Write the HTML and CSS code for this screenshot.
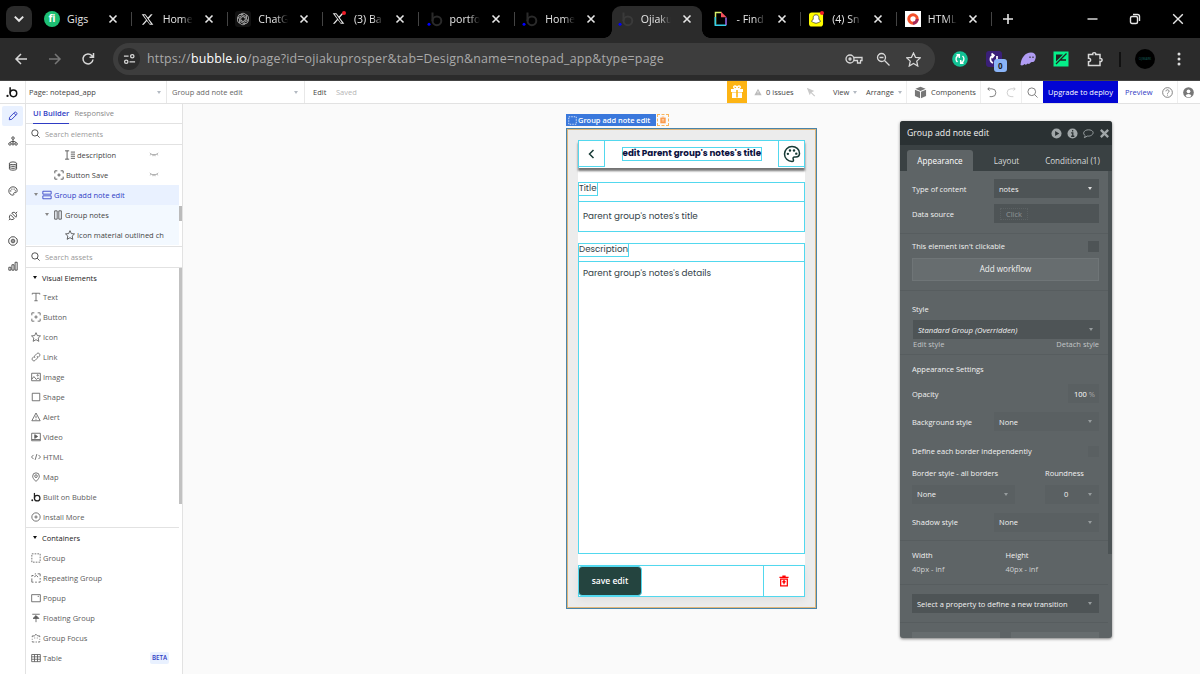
FILE: index.html
```
<!DOCTYPE html>
<html lang="en">
<head>
  <meta charset="UTF-8" />
  <title>Ojiakuprosper | Bubble Editor</title>
  <meta name="viewport" content="width=device-width, initial-scale=1.0" />
  <link rel="stylesheet" href="styles.css">
</head>
<body>

  <!-- Icon sprite -->
  <svg class="sprite" width="0" height="0">
    <symbol id="close" viewBox="0 0 10 10"><path d="M1.5 1.5l7 7M8.5 1.5l-7 7"/></symbol>
    <symbol id="x-logo" viewBox="0 0 24 24"><path stroke="none" fill="currentColor" fill-rule="evenodd" d="M18.2 2.300h3.300l-7.200 8.200 8.500 11.200h-6.700l-5.200-6.800-6 6.800H1.700l7.700-8.800L1.300 2.300h6.800l4.700 6.200zM18.500 20L7.500 4H5l11 16z"/></symbol>
    <symbol id="bubble" viewBox="0 0 16 16"><circle class="b-dot" cx="2" cy="13.200" r="1.500"/><path d="M5.500 1.500V10"/><circle cx="9.900" cy="9.800" r="4.400"/></symbol>
    <symbol id="search" viewBox="0 0 12 12"><circle cx="5.200" cy="5.200" r="4.200"/><path d="M8.200 8.200l3.300 3.300"/></symbol>
    <symbol id="star" viewBox="0 0 12 12"><path d="M6 .8l1.600 3.500 3.800.4-2.800 2.600.8 3.900L6 9.200l-3.400 2 .8-3.900L.6 4.700l3.800-.4z"/></symbol>
    <symbol id="button" viewBox="0 0 12 12"><path d="M1 4V1h3M8 1h3v3M11 8v3H8M4 11H1V8M6 4v4M4 6h4"/></symbol>
    <symbol id="palette" viewBox="0 0 24 24"><path d="M12 2a10 10 0 1 0 0 20c2 0 2.300-1.500 1.700-2.800-.8-1.700 0-3.200 1.800-3.200H17c3 0 5-2 5-5C22 5.800 17.500 2 12 2z"/><g fill="currentColor" stroke="none"><circle cx="6.500" cy="11.800" r="1.600"/><circle cx="9.300" cy="7.300" r="1.600"/><circle cx="14.700" cy="7.300" r="1.600"/><circle cx="17.700" cy="11.500" r="1.600"/></g></symbol>
    <symbol id="hidden" viewBox="0 0 12 6"><path d="M1 1c2 3 8 3 10 0M2.500 2.500L1.500 4M5 3.300L4.700 5M7 3.300L7.300 5M9.500 2.500l1 1.500"/></symbol>
    <symbol id="dashed" viewBox="0 0 12 12"><rect x="1" y="1" width="10" height="10" stroke-dasharray="2 1.333"/></symbol>
    <symbol id="trash" viewBox="0 0 12 14"><path d="M.5 2.500h11M4 1.200h4M2 4.800v8h8v-8zM6 11V7M4.200 8.500L6 6.700l1.800 1.800"/></symbol>
  </svg>

  <!-- Browser tabs -->
  <div class="tabstrip">
    <div class="tab-search"><svg viewBox="0 0 10 10"><path d="M1.500 3l3.500 3.500L8.500 3"/></svg></div>
    <div class="tab"><span class="fav fiverr">fi</span><span class="name">Gigs</span><svg class="close"><use href="#close"/></svg></div>
    <div class="tab"><svg class="fav xlogo"><use href="#x-logo"/></svg><span class="name">Home</span><svg class="close"><use href="#close"/></svg></div>
    <div class="tab">
      <svg class="fav gpt" viewBox="0 0 16 16"><rect width="16" height="16" rx="3" fill="#111" stroke="none"/><g transform="translate(8 8)"><path id="petal" d="M-2.500-4.500C-1-6.500 3-6 3.500-3v3.500L0 2.500"/><use href="#petal" transform="rotate(60)"/><use href="#petal" transform="rotate(120)"/><use href="#petal" transform="rotate(180)"/><use href="#petal" transform="rotate(240)"/><use href="#petal" transform="rotate(300)"/></g></svg>
      <span class="name">ChatG</span><svg class="close"><use href="#close"/></svg>
    </div>
    <div class="tab"><span class="fav badge"><svg class="xlogo"><use href="#x-logo"/></svg></span><span class="name">(3) Ba</span><svg class="close"><use href="#close"/></svg></div>
    <div class="tab"><svg class="fav bub"><use href="#bubble"/></svg><span class="name">portfo</span><svg class="close"><use href="#close"/></svg></div>
    <div class="tab last"><svg class="fav bub"><use href="#bubble"/></svg><span class="name">Home</span><svg class="close"><use href="#close"/></svg></div>
    <div class="tab current"><svg class="fav bub"><use href="#bubble"/></svg><span class="name">Ojiaku</span><svg class="close"><use href="#close"/></svg></div>
    <div class="tab">
      <svg class="fav" viewBox="0 0 16 16"><path d="M8.500 1.500H2.500v12" stroke="#d8f06a" stroke-width="1.500"/><path d="M2.300 6v8.300h11" stroke="#35cfe8" stroke-width="1.500"/><path d="M13 14V6.500" stroke="#9b6cf0" stroke-width="1.500"/><path d="M8 .8l5.700 5.500H8z" fill="#f4505c" stroke="none"/></svg>
      <span class="name">- Find</span><svg class="close"><use href="#close"/></svg>
    </div>
    <div class="tab">
      <span class="fav badge snap"><svg viewBox="0 0 16 16"><rect width="15" height="15" y="1" rx="3" fill="#fffc00" stroke="none"/><path d="M7.500 3.500c2 0 3 1.300 3 3v1.500c.2 1 1.200 2 2 2.300-.8 1-1.800.8-2.300 1.500-1 0-1.700.8-2.700.8s-1.700-.8-2.700-.8c-.5-.7-1.500-.5-2.300-1.500.8-.3 1.800-1.300 2-2.300V6.500c0-1.700 1-3 3-3z" fill="#fff" stroke="#222" stroke-width=".7"/></svg></span>
      <span class="name">(4) Sn</span><svg class="close"><use href="#close"/></svg>
    </div>
    <div class="tab">
      <svg class="fav" viewBox="0 0 16 16"><rect width="16" height="16" fill="#fff" stroke="none"/><circle cx="8" cy="8" r="4.200" stroke="#f4502a" stroke-width="3"/><path d="M8 12.200a4.200 4.200 0 0 0 4.200-4.200" stroke="#a3285c" stroke-width="3"/></svg>
      <span class="name">HTML</span><svg class="close"><use href="#close"/></svg>
    </div>
    <svg class="new-tab" viewBox="0 0 12 12"><path d="M6 1v10M1 6h10"/></svg>
    <div class="window-buttons">
      <svg viewBox="0 0 12 12"><path d="M1.500 6h10"/></svg>
      <svg viewBox="0 0 12 12"><rect x="1.500" y="3.500" width="7" height="7" rx="1.500"/><path d="M4 1.500h4.500a2 2 0 0 1 2 2V8"/></svg>
      <svg viewBox="0 0 12 12"><path d="M1.200 1.200l9.600 9.600M10.800 1.200l-9.600 9.600"/></svg>
    </div>
  </div>

  <!-- Address bar -->
  <div class="toolbar">
    <svg class="nav" viewBox="0 0 14 14"><path d="M13 7H2M7 2L2 7l5 5"/></svg>
    <svg class="nav off" viewBox="0 0 14 14"><path d="M1 7h11M7 2l5 5-5 5"/></svg>
    <svg class="nav reload" viewBox="0 0 14 14"><path d="M12 7.500A5 5 0 1 1 10.800 3.600L12.500 5M12.500 1v4.200H8.500"/></svg>
    <div class="address">
      <span class="site"><svg viewBox="0 0 14 12"><path d="M1 3h5M7 9h6"/><circle cx="10" cy="3" r="1.800"/><circle cx="3.500" cy="9" r="1.800"/></svg></span>
      <span class="url">https://<b>bubble.io</b>/page?id=ojiakuprosper&amp;tab=Design&amp;name=notepad_app&amp;type=page</span>
      <svg class="key" viewBox="0 0 18 12"><circle cx="5" cy="6" r="4"/><circle cx="5" cy="6" r="1"/><path d="M9 4.500h8v3h-1.500v2.500h-3V7.500H9"/></svg>
      <svg class="zoom" viewBox="0 0 14 14"><circle cx="5.500" cy="5.500" r="4"/><path d="M8.500 8.500l5 5M3.500 5.500h4"/></svg>
      <svg class="fave"><use href="#star"/></svg>
    </div>
    <div class="extensions">
      <svg viewBox="0 0 16 16"><circle cx="8" cy="8" r="7.800" fill="#12c295" stroke="none"/><path d="M5.500 11A4 4 0 0 1 5 5.500l2-1.500M10.500 5a4 4 0 0 1 .5 5.500L9 12M7.300 7V3.800H4.500M8.700 9v3.200h2.800" stroke="#fff" stroke-width="1.500"/></svg>
      <span class="counter"><svg viewBox="0 0 16 16"><rect width="16" height="16" rx="3" fill="#3a1f78" stroke="none"/><path d="M7 12A4 4 0 0 1 7 4.500M5.500 2.500L8 4.500 6 7M11 5v4" stroke="#fff" stroke-width="1.700"/></svg><i>0</i></span>
      <svg viewBox="0 0 16 16"><path d="M.5 14C1 7 5 1.500 11 1.500c4 0 5.500 3 4.500 6-.5 2-1.500 4-3 3.500-1-.3-1.500 0-2 .8-.8 1.400-2 1.200-2.800.7-.8 1.200-2.200 1.600-3.200.6C3.500 14.300 2 15 .5 14z" fill="#b09cf3" stroke="none"/><path d="M10 5.500v1.500M13 5.500v1.500" stroke="#333" stroke-width="1.200"/></svg>
      <svg viewBox="0 0 16 16"><rect x=".5" y=".5" width="15" height="15" fill="#05f08a" stroke="none"/><path d="M3 3.500h7L3 10.500z" fill="#222" stroke="none"/><path d="M3 13L13.500 2.500M7 9h6" stroke="#222" stroke-width="1.300"/></svg>
      <svg viewBox="0 0 16 16"><path d="M1.500 3.500h4.200c-.6-2.500 3.600-2.500 3 0h4.300v4c2.800-.5 2.800 3.500 0 3v4h-11.500v-3.800c2.800.3 2.800-3.700 0-3.400z"/></svg>
      <em></em>
      <span class="avatar">OJIMARK</span>
      <svg class="dots" viewBox="0 0 4 16"><g fill="#ddd" stroke="none"><circle cx="2" cy="3" r="1.500"/><circle cx="2" cy="8" r="1.500"/><circle cx="2" cy="13" r="1.500"/></g></svg>
    </div>
  </div>

  <!-- Bubble header -->
  <div class="app-bar">
    <div class="logo"><svg><use href="#bubble"/></svg></div>
    <div class="page-select">Page: notepad_app<i class="caret"></i></div>
    <div class="element-select">Group add note edit<i class="caret"></i></div>
    <span class="edit">Edit</span><span class="saved">Saved</span>
    <div class="actions">
      <div class="gift"><svg viewBox="0 0 14 14"><path fill="#fff" stroke="none" d="M1 4h12v3H1zM2 7.500h10V13H2z"/><path d="M7 4C3 4 3 1 5 1s2 3 2 3 0-3 2-3 2 3-2 3" stroke="#fff" stroke-width="1.300"/><path d="M7 5v7.500" stroke="#fdb414" stroke-width="1.600"/></svg></div>
      <div class="issues"><svg viewBox="0 0 12 12"><path fill="#bbb" stroke="none" d="M6 1l5.500 10H.5z"/><path d="M6 4.500v3M6 8.500v1" stroke="#fff"/></svg>0 issues</div>
      <svg class="cursor" viewBox="0 0 12 12"><path fill="#c9c9c9" stroke="none" d="M1 1l9 3.800-3.300 1.400L11 10.500l-1 1-4.200-4.400L4.500 10z"/></svg>
      <div class="menu view">View<i class="caret"></i></div>
      <div class="menu arrange">Arrange<i class="caret"></i></div>
      <div class="components"><svg viewBox="0 0 14 14"><path fill="#777" stroke="none" d="M7 .8L12.500 3 7 5.300 1.500 3zM1 4l5.500 2.300v7L1 10.700zM13 4L7.500 6.300v7l5.500-2.600z"/></svg>Components</div>
      <div class="history"><svg viewBox="0 0 12 12"><path d="M2 2h4.500a4 4 0 0 1 0 8.500H4M3.800.3L2 2l1.800 2"/></svg><svg class="off" viewBox="0 0 12 12"><path d="M10 2H5.500a4 4 0 0 0 0 8.500H8M8.200.3L10 2 8.200 4"/></svg></div>
      <div class="find"><svg><use href="#search"/></svg></div>
      <div class="deploy">Upgrade to deploy</div>
      <div class="preview">Preview</div>
      <div class="help"><svg viewBox="0 0 12 12"><circle cx="6" cy="6" r="5.300"/><path d="M4.300 4.700c0-2.200 3.400-2.200 3.400 0C7.700 6 6 6 6 7.300M6 8.400v1"/></svg></div>
      <div class="user"><svg viewBox="0 0 12 12"><circle cx="6" cy="6" r="5.800" fill="#777" stroke="none"/><circle cx="6" cy="4.700" r="2" fill="#fff" stroke="none"/><path fill="#fff" stroke="none" d="M2.800 9.800c.5-3 5.900-3 6.400 0a5 5 0 0 1-6.400 0z"/></svg></div>
    </div>
  </div>

  <div class="workspace">
    <div class="rail">
      <div class="active"><svg viewBox="0 0 12 12"><path d="M1.500 10.500l.5-3L8 1.500c1-1 3.500 1 2.500 2.500l-6 6zM7 2.500L9.500 5"/></svg></div>
      <div><svg viewBox="0 0 12 12"><circle cx="6" cy="2.500" r="1.500"/><circle cx="2.300" cy="9.500" r="1.500"/><circle cx="6" cy="9.500" r="1.300"/><circle cx="9.700" cy="9.500" r="1.500"/><path d="M6 4v4M2.300 8C2.500 6 9.500 6 9.700 8"/></svg></div>
      <div><svg viewBox="0 0 12 12"><ellipse cx="6" cy="2.800" rx="4.300" ry="1.700"/><path d="M1.700 3v6.500c0 2 8.600 2 8.600 0V3M1.700 5c0 2 8.600 2 8.600 0M1.700 7.300c0 2 8.600 2 8.600 0"/></svg></div>
      <div><svg class="thick"><use href="#palette"/></svg></div>
      <div><svg viewBox="0 0 12 12"><path d="M3 4.500l4.500 4.500c-2 2-4 1.500-5 .5s-1.500-3 .5-5zM9.500 7.500L4.500 2.500c2-1.500 3.500-1 4.500 0s2 2.500.5 5M2.300 9.700L1 11M9 3l2-2"/></svg></div>
      <div><svg viewBox="0 0 12 12"><path d="M4 1h4l1 1.300 1.800 1.200.4 2.500-.4 2.500L9 9.700 8 11H4L3 9.700 1.200 8.500.8 6l.4-2.500L3 2.300z"/><circle cx="6" cy="6" r="2.200"/><circle cx="6" cy="6" r=".6"/></svg></div>
      <div><svg viewBox="0 0 12 12"><path d="M1 7.500h2.500V11H1zM4.700 4.500h2.500V11H4.700zM8.500 1.500H11V11H8.500z"/></svg></div>
    </div>

    <div class="sidebar">
      <div class="side-tabs"><span class="active">UI Builder</span><span>Responsive</span></div>
      <div class="side-search"><svg><use href="#search"/></svg>Search elements</div>
      <div class="tree">
        <div class="node n3"><svg viewBox="0 0 12 12"><path d="M0 1h5M0 11h5M2.500 1v10M7 2.500h5M7 5h5M7 7.500h5M7 10h5"/></svg>description<svg class="eye"><use href="#hidden"/></svg></div>
        <div class="node n2"><svg><use href="#button"/></svg>Button Save<svg class="eye"><use href="#hidden"/></svg></div>
        <div class="node n1 selected"><i class="caret"></i><svg viewBox="0 0 12 12"><path d="M1 1.500h10v3.500H1zM1 7h10v3.500H1z"/></svg>Group add note edit</div>
        <div class="node n2 child"><i class="caret"></i><svg viewBox="0 0 12 12"><path d="M2 1h3v10H2zM7 1h3v10H7z"/></svg>Group notes</div>
        <div class="node n3 child"><svg><use href="#star"/></svg>Icon material outlined ch</div>
      </div>
      <div class="side-search assets"><svg><use href="#search"/></svg>Search assets</div>
      <div class="palette-list">
        <div class="heading"><i class="caret"></i>Visual Elements</div>
        <div class="item"><svg viewBox="0 0 12 12"><path d="M1.500 3V1.500h9V3M6 1.500v9M4 10.500h4"/></svg>Text</div>
        <div class="item"><svg><use href="#button"/></svg>Button</div>
        <div class="item"><svg><use href="#star"/></svg>Icon</div>
        <div class="item"><svg viewBox="0 0 12 12"><path d="M5 7.200C3.500 6 4 5 5 4l2-2c2-2 5 1 3 3L8.500 6.500M7 4.800C8.500 6 8 7 7 8l-2 2c-2 2-5-1-3-3l1.500-1.500"/></svg>Link</div>
        <div class="item"><svg viewBox="0 0 12 12"><path d="M.8 1.500h10.400v9H.8zM1 8.500l2.500-3 3 3.500 2-2 2.500 2.500"/><circle cx="8" cy="4" r=".8"/></svg>Image</div>
        <div class="item"><svg viewBox="0 0 12 12"><path d="M1.500 1.500h9v9h-9z"/></svg>Shape</div>
        <div class="item"><svg viewBox="0 0 12 12"><path d="M6 1.200l5 9.300H1zM6 4.500v3M6 8.500v.8"/></svg>Alert</div>
        <div class="item"><svg viewBox="0 0 12 12"><path d="M.8 1.500h10.400v9H.8zM1 9h10"/><path d="M4.500 3.200l3.500 2.200-3.500 2.200z" fill="currentColor"/></svg>Video</div>
        <div class="item"><svg viewBox="0 0 12 12"><path d="M3 3.500L.6 6 3 8.500M9 3.500L11.400 6 9 8.500M7 2.500l-2 7"/></svg>HTML</div>
        <div class="item"><svg viewBox="0 0 12 12"><path d="M6 11.300C3 8.500 2 6.800 2 5a4 4 0 0 1 8 0c0 1.800-1 3.500-4 6.300z"/><circle cx="6" cy="5" r="1.600"/></svg>Map</div>
        <div class="item"><svg class="mini-b"><use href="#bubble"/></svg>Built on Bubble</div>
        <div class="item"><svg viewBox="0 0 12 12"><circle cx="6" cy="6" r="5"/><path d="M6 4v4M4 6h4"/></svg>Install More</div>
        <div class="heading split"><i class="caret"></i>Containers</div>
        <div class="item"><svg><use href="#dashed"/></svg>Group</div>
        <div class="item"><svg viewBox="0 0 12 12"><path d="M1 4.500V3h2M4.500 1.200L6 1M8 1h3v3M11 6v2M9 11h2V9.500M1 6.500V11h2M5 11h2M4 4.500L6.500 3 8.500 5"/></svg>Repeating Group</div>
        <div class="item"><svg viewBox="0 0 12 12"><path d="M.8 2h10.400v8.500H.8zM8 4h1.500"/></svg>Popup</div>
        <div class="item"><svg viewBox="0 0 12 12"><path d="M1.500 1.500h9M6 11V4"/><path d="M2.500 6.500L6 3l3.500 3.500z" fill="currentColor"/></svg>Floating Group</div>
        <div class="item"><svg viewBox="0 0 12 12"><path d="M1.500 5V3.500H4l2-2 2 2h2.500V5M1.500 7v1M10.500 7v1M1.500 10v.8H4M5.500 10.800h1.500M8.500 10.800h2V10M4 6h1M7 6h1"/></svg>Group Focus</div>
        <div class="item"><svg viewBox="0 0 12 12"><path d="M.8 1.800h10.400v8.600H.8zM.8 4.600h10.400M.8 7.500h10.400M4.200 2v8.400M7.800 2v8.400"/></svg>Table<span class="beta">BETA</span></div>
      </div>
    </div>

    <!-- Canvas -->
    <div class="canvas">
      <div class="tag-row"><div class="tag"><svg><use href="#dashed"/></svg>Group add note edit</div><div class="note"><svg viewBox="0 0 10 12"><path d="M.5 2h9v9.500h-9z" fill="#fb9a4b" stroke="none"/><path d="M3 1h4" stroke="#fb9a4b"/><path d="M3 5h4M3 7.500h4" stroke="#fff3e6"/></svg></div></div>
      <div class="frame">
        <div class="phone">
          <div class="top">
            <div class="cell back"><svg viewBox="0 0 10 14"><path d="M6.500 3L2.500 7l4 4"/></svg></div>
            <div class="title"><span>edit Parent group's notes's title</span></div>
            <div class="cell"><svg class="pal"><use href="#palette"/></svg></div>
          </div>
          <div class="field short"><div class="label"><span class="w-title">Title</span></div><div class="value">Parent group's notes's title</div></div>
          <div class="field tall"><div class="label"><span class="w-desc">Description</span></div><div class="value">Parent group's notes's details</div></div>
          <div class="bottom"><div class="save">save edit</div><div class="remove"><svg><use href="#trash"/></svg></div></div>
        </div>
      </div>
    </div>

    <!-- Property editor -->
    <div class="editor">
      <div class="editor-head">Group add note edit
        <span class="head-icons">
          <svg viewBox="0 0 12 12"><circle cx="6" cy="6" r="5.500" fill="currentColor" stroke="none"/><path d="M4.500 3.300L9 6 4.500 8.700z" fill="#2a3133" stroke="none"/></svg>
          <svg viewBox="0 0 12 12"><circle cx="6" cy="6" r="5.500" fill="currentColor" stroke="none"/><path d="M4.500 5.300H6.300V9M4.500 9h3.500M5.500 3h1.300" stroke="#2a3133" stroke-width="1.400"/></svg>
          <svg viewBox="0 0 12 12"><path d="M2.500 8.500C-1 6 1 2 6 2s6.500 3.500 3.500 5.700C8 8.800 6 9 4.800 8.800L1.500 10.500z"/></svg>
          <svg class="heavy" viewBox="0 0 12 12"><path d="M2 2l8 8M10 2l-8 8"/></svg>
        </span>
      </div>
      <div class="editor-tabs"><span class="active">Appearance</span><span class="lay">Layout</span><span class="cond">Conditional (1)</span></div>
      <div class="editor-body">
        <section class="s-type">
          <div class="prop">Type of content<div class="box w105 dark">notes<i class="caret light"></i></div></div>
          <div class="prop">Data source<div class="box w105 dark"><span class="click">Click</span></div></div>
        </section>
        <section class="s-click">
          <div class="prop">This element isn't clickable<div class="check dark"></div></div>
          <div class="workflow">Add workflow</div>
        </section>
        <section class="s-style">
          <div class="prop">Style</div>
          <div class="box style-select dark">Standard Group (Overridden)<i class="caret"></i></div>
          <div class="links"><span>Edit style</span><span>Detach style</span></div>
        </section>
        <section class="s-appear">
          <div class="prop">Appearance Settings</div>
          <div class="prop">Opacity<div class="box opacity"><b>100</b>&nbsp;%</div></div>
          <div class="prop bg-row">Background style<div class="box w105">None<i class="caret"></i></div></div>
          <div class="prop h28">Define each border independently<div class="check"></div></div>
          <div class="prop h16 pair"><span>Border style - all borders</span><span class="round">Roundness</span></div>
          <div class="prop h28 boxes"><div class="box w103">None<i class="caret"></i></div><div class="box w54">0<i class="caret"></i></div></div>
          <div class="prop h28">Shadow style<div class="box w105">None<i class="caret"></i></div></div>
        </section>
        <section class="s-size">
          <div><b>Width</b>40px - inf</div>
          <div><b>Height</b>40px - inf</div>
        </section>
        <section class="s-trans"><div class="box dark">Select a property to define a new transition<i class="caret"></i></div></section>
        <section class="s-more"><div></div><div></div></section>
      </div>
    </div>
  </div>

</body>
</html>
```

FILE: styles.css
```
* {
  box-sizing: border-box;
}

body {
  margin: 0;
  width: 1200px;
  height: 674px;
  overflow: hidden;
  background: #fafafa;
  font-family: 'Open Sans', 'Noto Sans', sans-serif;
  font-size: 7.5px;
  color: #444;
  white-space: nowrap;
}

svg {
  fill: none;
  stroke: currentColor;
  stroke-width: 1;
  flex: none;
}

.sprite {
  display: none;
}

/* Browser tabs */
.tabstrip {
  display: flex;
  align-items: center;
  height: 38px;
  background: #000;
  color: #e6e6e6;
}

.tab-search {
  width: 26px;
  height: 26px;
  margin: 0 4px 0 6px;
  border-radius: 8px;
  background: #2b2b2b;
  display: flex;
  align-items: center;
  justify-content: center;
}

.tab-search svg {
  width: 12px;
  height: 12px;
  stroke-width: 1.6;
}

.tab {
  width: 95.65px;
  height: 38px;
  padding-left: 8px;
  display: flex;
  align-items: center;
  position: relative;
}

.tab::after {
  content: '';
  width: 1px;
  height: 14px;
  background: #444;
  margin-left: 13px;
}

.tab.last::after,
.tab.current::after {
  background: none;
}

.tab.current {
  background: #2b2b2b;
  height: 32px;
  width: 90px;
  margin: 6px 3.65px 0 2px;
  padding: 0 0 6px 6px;
  border-radius: 9px 9px 0 0;
}

/* Flared feet of the current tab */
.tab.current::before,
.tab.current::after {
  content: '';
  position: absolute;
  bottom: 0;
  width: 8px;
  height: 8px;
  margin: 0;
}

.tab.current::before {
  left: -8px;
  background: radial-gradient(circle at 0 0, transparent 7.5px, #2b2b2b 8px);
}

.tab.current::after {
  right: -8px;
  background: radial-gradient(circle at 100% 0, transparent 7.5px, #2b2b2b 8px);
}

.fav {
  width: 16px;
  height: 16px;
  margin-right: 7px;
  flex: none;
}

.fiverr {
  border-radius: 50%;
  background: #1dbf73;
  color: #fff;
  font: bold 10px/15px 'Open Sans', sans-serif;
  text-align: center;
}

svg.xlogo {
  width: 13px;
  height: 13px;
}

svg.fav.xlogo {
  margin: 0 9px 0 1px;
}

.gpt {
  stroke: #aaa;
  stroke-width: .9;
}

.badge {
  position: relative;
}

.badge svg {
  display: block;
  margin: 1px;
}

.badge.snap svg {
  width: 15px;
  height: 16px;
  margin: 0;
}

.badge::after {
  content: '';
  position: absolute;
  top: 0;
  right: 1px;
  width: 4px;
  height: 4px;
  border-radius: 50%;
  background: #f11c28;
}

.bub {
  color: #2a2a2a;
  stroke-width: 2;
}

.current .bub {
  color: #3a3a3a;
}

.b-dot {
  fill: var(--dot, currentColor);
  stroke: none;
}

.bub {
  --dot: #00f;
}

.name {
  width: 30px;
  font: 10.6px/16px 'Open Sans', sans-serif;
  -webkit-mask-image: linear-gradient(to right, #000 60%, transparent);
}

.tab:nth-child(2) .name {
  -webkit-mask-image: none;
}

.close {
  width: 10px;
  height: 10px;
  margin-left: 11px;
  stroke-width: 1.6;
}

.new-tab {
  width: 12px;
  height: 12px;
  margin-left: 10px;
  stroke-width: 1.6;
}

.window-buttons {
  display: flex;
  gap: 31px;
  margin: 0 16px 0 auto;
}

.window-buttons svg {
  width: 12px;
  height: 12px;
  stroke-width: 1.4;
}

/* Address bar */
.toolbar {
  display: flex;
  align-items: center;
  height: 43px;
  background: #2b2b2b;
  border-bottom: 1px solid #444;
  color: #d8d8d8;
}

.nav {
  width: 14px;
  height: 14px;
  margin-left: 14px;
  margin-right: 6px;
  stroke-width: 1.5;
}

.nav.off {
  color: #777;
}

.nav.reload {
  margin-left: 13px;
  margin-right: 18px;
}

.address {
  display: flex;
  align-items: center;
  width: 822px;
  height: 32px;
  padding: 0 14px 0 5px;
  border-radius: 16px;
  background: #3d3d3d;
}

.site {
  width: 22px;
  height: 22px;
  border-radius: 50%;
  background: #2b2b2b;
  display: flex;
  align-items: center;
  justify-content: center;
  margin-right: 7px;
}

.site svg {
  width: 13px;
  height: 12px;
  stroke-width: 1.4;
}

.url {
  flex: 1;
  font: 12.4px/18px 'Open Sans', sans-serif;
  letter-spacing: .2px;
  color: #aaa;
}

.url b {
  font-weight: normal;
  color: #fff;
}

.key {
  width: 18px;
  height: 12px;
  margin-right: 13px;
  stroke-width: 1.3;
}

.zoom {
  width: 14px;
  height: 14px;
  margin-right: 16px;
  stroke-width: 1.3;
}

.fave {
  width: 15px;
  height: 15px;
  stroke-width: 1;
}

.extensions {
  flex: 1;
  display: flex;
  align-items: center;
  padding-left: 17px;
}

.extensions > svg,
.counter svg {
  width: 16px;
  height: 16px;
  display: block;
}

.extensions > svg,
.counter {
  margin-right: 17.8px;
}

.extensions > svg:nth-child(5) {
  stroke-width: 1.5;
}

.counter {
  position: relative;
}

.counter i {
  position: absolute;
  left: 8px;
  top: 8px;
  width: 13px;
  height: 13px;
  border-radius: 3px;
  background: #8ab4f8;
  color: #222;
  font: bold 8px/13px 'Open Sans', sans-serif;
  text-align: center;
}

.extensions em {
  width: 2px;
  height: 15px;
  background: #111;
  margin-left: -2px;
}

.avatar {
  width: 20px;
  height: 20px;
  margin: 0 22px 0 14px;
  border-radius: 50%;
  background: #000;
  color: #16605d;
  font-size: 3px;
  line-height: 20px;
  text-align: center;
}

.extensions > svg.dots {
  width: 4px;
  margin: 0;
}

/* Bubble header */
.app-bar {
  display: flex;
  align-items: center;
  height: 23px;
  background: #fff;
  border-bottom: 1px solid #e2e2e2;
}

.caret {
  width: 0;
  height: 0;
  border: 2.5px solid transparent;
  border-top: 3px solid #b3bac2;
  border-bottom: 0;
}

.logo {
  width: 26px;
  height: 22px;
  padding: 5px 6px;
  border-right: 1px solid #e8e8e8;
  color: #111;
}

.logo svg {
  width: 12px;
  height: 12px;
  stroke-width: 2;
  display: block;
}

.page-select,
.element-select {
  display: flex;
  align-items: center;
  justify-content: space-between;
  width: 141px;
  height: 22px;
  padding: 0 5px 0 3px;
  border-right: 1px solid #e8e8e8;
}

.element-select {
  width: 138px;
  padding: 0 6px 0 5px;
  color: #666;
}

.edit {
  width: 23px;
  margin-left: 8px;
}

.saved {
  color: #b5b5b5;
}

.actions {
  display: flex;
  align-items: center;
  margin-left: auto;
  width: 473px;
  height: 22px;
}

.actions svg {
  width: 11px;
  height: 11px;
  display: block;
}

.actions > div {
  display: flex;
  align-items: center;
  height: 22px;
}

.gift {
  width: 20px;
  padding-left: 3px;
  background: #fdb414;
}

.gift svg {
  width: 14px;
  height: 14px;
}

.issues {
  width: 59px;
  padding-left: 7px;
  gap: 4px;
}

.issues svg {
  width: 8px;
  height: 8px;
}

.actions .cursor {
  width: 10px;
  height: 10px;
}

.menu {
  width: 33px;
  gap: 4px;
}

.menu.view {
  margin-left: 17px;
}

.menu.arrange {
  width: 41px;
  border-right: 1px solid #eee;
}

.components {
  width: 74px;
  padding-left: 7px;
  gap: 4px;
  border-right: 1px solid #eee;
}

.components svg {
  width: 13px;
  height: 13px;
}

.history {
  width: 41px;
  padding-left: 5px;
  gap: 9px;
  color: #777;
  border-right: 1px solid #eee;
}

.history .off {
  color: #ccc;
}

.find {
  width: 21px;
  padding-left: 5px;
  color: #777;
}

.deploy {
  width: 75px;
  justify-content: center;
  background: #0205d3;
  color: #fff;
}

.preview {
  width: 41px;
  padding-left: 7px;
  color: #2f3cc4;
}

.help {
  width: 19px;
  padding-left: 3px;
  color: #777;
  border-right: 1px solid #eee;
}

.user {
  padding-left: 5px;
}

/* Left rail and sidebar */
.workspace {
  display: flex;
  height: 570px;
}

.rail {
  width: 26px;
  background: #fff;
  border-right: 1px solid #e2e2e2;
  padding: 2px;
}

.rail div {
  width: 21px;
  height: 20px;
  margin-bottom: 5px;
  display: flex;
  align-items: center;
  justify-content: center;
  border-radius: 2px;
}

.rail svg {
  width: 10px;
  height: 10px;
  stroke-width: 1.1;
}

.rail .thick {
  stroke-width: 2.2;
}

.rail .active {
  background: #e9f1ff;
  color: #2f3cc4;
}

.sidebar {
  width: 157px;
  background: #fff;
  border-right: 1px solid #e2e2e2;
}

.side-tabs {
  display: flex;
  gap: 5px;
  height: 20px;
  padding-left: 7px;
  border-bottom: 1px solid #e2e2e2;
  line-height: 19px;
  color: #888;
}

.side-tabs .active {
  color: #2f3cc4;
  font-weight: 600;
  font-size: 7.6px;
  height: 20px;
  border-bottom: 1.5px solid #2f3cc4;
}

.side-search {
  display: flex;
  align-items: center;
  height: 21px;
  padding: 0 0 1px 5px;
  gap: 5px;
  border-bottom: 1px solid #e2e2e2;
  color: #999;
}

.side-search svg {
  width: 9px;
  height: 9px;
  color: #333;
  stroke-width: 1.1;
}

.assets {
  height: 22px;
  border-top: 1px solid #e2e2e2;
}

.tree {
  height: 101px;
  background: linear-gradient(#bbb, #bbb) no-repeat right 61px / 3px 15px;
}

.node {
  display: flex;
  align-items: center;
  width: 153px;
  height: 20px;
  padding-bottom: 1px;
}

.node svg {
  width: 10px;
  height: 10px;
  margin-right: 2px;
}

.node .caret {
  margin-right: 4px;
  border-top-color: #888;
}

.n1 { padding-left: 8px; }
.n2 { padding-left: 28px; }
.n2.child { padding-left: 19px; }
.n3 { padding-left: 39px; }

.node svg.eye {
  position: absolute;
  left: 149px;
  height: 5px;
  color: #999;
}

.selected {
  background: #e9f1ff;
  color: #2f3cc4;
}

.child {
  background: #f3f9ff;
}

.palette-list {
  height: 406px;
  overflow: hidden;
  background: linear-gradient(#c1c1c1, #c1c1c1) no-repeat right top / 3px 236px;
  color: #5c5c5c;
}

.heading,
.item {
  display: flex;
  align-items: center;
  height: 20px;
}

.heading {
  padding: 0 0 1px 7px;
  color: #222;
}

.palette-list .heading:first-child {
  height: 19px;
  padding-bottom: 0;
}

.heading .caret {
  margin-right: 5px;
  border-top-color: #111;
}

.split {
  width: 153px;
  height: 21px;
  border-top: 1px solid #e2e2e2;
}

.item {
  padding-left: 5px;
}

.item svg {
  width: 10px;
  height: 10px;
  margin-right: 2px;
}

.item .mini-b {
  stroke-width: 2;
  color: #222;
}

.beta {
  margin: 0 13px 0 auto;
  padding: 0 2px;
  border-radius: 2px;
  background: #e9f1ff;
  color: #2f3cc4;
  font-size: 6.2px;
  font-weight: 600;
  line-height: 12px;
}

/* Canvas */
.canvas {
  width: 717px;
  padding: 10px 0 0 383px;
}

.tag-row {
  display: flex;
  gap: 1px;
  height: 12px;
  margin-bottom: 2px;
}

.tag {
  display: flex;
  align-items: center;
  gap: 1px;
  width: 90px;
  height: 12px;
  padding-left: 2px;
  background: #3a78dc;
  color: #fff;
  font-weight: 600;
  font-size: 7.45px;
}

.tag svg {
  width: 9px;
  height: 9px;
}

.note {
  width: 12px;
  height: 12px;
  border: 1px dashed #f9b65c;
  display: flex;
  align-items: center;
  justify-content: center;
}

.note svg {
  width: 6px;
  height: 8px;
}

.frame {
  width: 251px;
  height: 481px;
  border: 1px solid #4a84a8;
  padding: 11px;
  background: #ececec;
  box-shadow: inset 0 0 0 1px #e0b67a;
}

.phone {
  width: 227px;
  height: 457px;
  background: #fff;
  font-family: Poppins, 'Open Sans', sans-serif;
  color: #333f48;
}

.top {
  display: flex;
  height: 28px;
  border: 1px solid #52d8ee;
  border-bottom: 0;
  box-shadow: 0 3px 2px rgba(0, 0, 0, .55);
}

.cell {
  width: 26px;
  height: 26px;
  border: solid #52d8ee;
  border-width: 0 0 1px 1px;
  display: flex;
  align-items: center;
  justify-content: center;
  color: #173a35;
}

.cell.back {
  border-width: 0 1px 1px 0;
}

.back svg {
  width: 10px;
  height: 14px;
  stroke-width: 1.5;
}

.pal {
  width: 18px;
  height: 18px;
  stroke-width: 2;
}

.title {
  flex: 1;
  display: flex;
  justify-content: center;
  align-items: center;
  height: 25px;
}

.title span {
  height: 14px;
  width: 140px;
  border: 1px solid #52d8ee;
  font-size: 8.75px;
  font-weight: bold;
  line-height: 11px;
  color: #0b1140;
}

.field {
  width: 227px;
  border: 1px solid #52d8ee;
}

.short {
  height: 50px;
  margin-top: 14px;
}

.tall {
  height: 311px;
  margin-top: 11px;
}

.label {
  height: 19px;
  border-bottom: 1px solid #52d8ee;
}

.tall .label {
  height: 18px;
}

.label span {
  display: block;
  height: 13px;
  border: solid #52d8ee;
  border-width: 0 1px 1px 0;
  font-size: 8.7px;
  line-height: 11px;
}

.w-title { width: 19px; }
.w-desc { width: 50px; }

.value {
  padding: 8px 0 0 4px;
  font-size: 8.8px;
  line-height: 12px;
}

.tall .value {
  padding-top: 5px;
}

.bottom {
  display: flex;
  justify-content: space-between;
  height: 32px;
  margin-top: 11px;
  border: 1px solid #52d8ee;
  box-shadow: 0 3px 8px rgba(0, 0, 0, .06);
}

.save {
  width: 64px;
  height: 30px;
  margin-left: -1px;
  border: 1px solid #52d8ee;
  border-radius: 4px;
  background: #24443f;
  color: #fff;
  font-family: 'Open Sans', sans-serif;
  font-size: 8.5px;
  font-weight: 600;
  line-height: 27px;
  text-align: center;
}

.remove {
  width: 41px;
  border-left: 1px solid #52d8ee;
  display: flex;
  align-items: center;
  justify-content: center;
  color: #f00;
}

.remove svg {
  width: 10px;
  height: 12px;
  stroke-width: 1.5;
}

/* Property editor */
.editor {
  width: 212px;
  height: 517px;
  margin-top: 17px;
  border-radius: 3px;
  overflow: hidden;
  background: #5e6466;
  box-shadow: 0 1px 3px rgba(0, 0, 0, .5);
  color: #f2f2f2;
  font-size: 7.5px;
}

.editor-head {
  display: flex;
  align-items: center;
  justify-content: space-between;
  height: 24px;
  padding: 0 2px 0 7px;
  background: #2a3133;
  font-size: 8.7px;
}

.head-icons {
  display: flex;
  gap: 5px;
  color: #a0a6a8;
}

.head-icons svg {
  width: 11px;
  height: 11px;
}

.head-icons .heavy {
  stroke-width: 2.5;
}

.editor-tabs {
  display: flex;
  align-items: flex-end;
  height: 26px;
  padding-left: 7px;
  background: #3a4143;
  color: #d8dadb;
  font-size: 8.1px;
  line-height: 21px;
}

.editor-tabs .active {
  width: 66px;
  height: 21px;
  border-radius: 3px 3px 0 0;
  background: #5e6466;
  color: #fff;
  text-align: center;
}

.lay {
  width: 67px;
  text-align: center;
}

.cond {
  width: 65px;
  text-align: center;
}

.editor-body {
  height: 467px;
  background: linear-gradient(#4c5355, #4c5355) no-repeat right top / 4px 383px;
}

.editor-body section {
  width: 208px;
  padding: 0 9px 0 12px;
  border-bottom: 1px solid #575d5f;
}

.prop {
  display: flex;
  align-items: center;
  justify-content: space-between;
  height: 25px;
}

.box {
  display: flex;
  align-items: center;
  justify-content: space-between;
  height: 19px;
  padding: 0 7px 0 5px;
  background: #5a6062;
}

.box .caret {
  border-top-color: #979c9e;
}

.box .caret.light {
  border-top-color: #ddd;
}

.box.dark {
  background: #4e5456;
}

.w105 { width: 105px; }
.w103 { width: 103px; }
.box.w54 { width: 54px; padding-left: 19px; }

.click {
  margin-left: 1px;
  padding: 0 5px;
  border: 1px dotted #5b6163;
  color: #8f9496;
}

.check {
  width: 11px;
  height: 11px;
  background: #5a6062;
}

.check.dark {
  background: #4e5456;
}

.editor-body .s-type {
  height: 63px;
  padding-top: 5px;
}

.s-click {
  height: 57px;
}

.s-click .prop {
  height: 24px;
}

.s-click .workflow {
  height: 23px;
  border: 1px solid #6f7577;
  background: #676d6f;
  text-align: center;
  line-height: 20px;
  font-size: 8.1px;
}

.editor-body .s-style {
  height: 64px;
  padding-top: 6px;
}

.s-style .prop {
  height: 23px;
}

.style-select {
  width: 187px;
  margin-left: 1px;
  font-style: italic;
  font-size: 7.7px;
}

.links {
  display: flex;
  justify-content: space-between;
  padding-left: 1px;
  color: #c3c6c7;
  line-height: 11px;
}

.editor-body .s-appear {
  height: 186px;
  padding-top: 1px;
}

.h28 {
  height: 28px;
}

.bg-row {
  height: 31px;
}

.h16 {
  height: 15px;
}

.box.opacity {
  width: 31px;
  color: #aaa;
  justify-content: flex-start;
  padding: 0 0 0 6px;
}

.opacity b {
  font-weight: normal;
  color: #fff;
}

.round {
  width: 54px;
}

.editor-body .s-size {
  display: flex;
  height: 44px;
  padding-top: 8px;
  line-height: 13.5px;
  color: #cfd1d2;
}

.s-size div {
  width: 94px;
}

.s-size b {
  display: block;
  font-weight: normal;
  color: #f2f2f2;
}

.editor-body .s-trans {
  height: 38px;
  padding-top: 9px;
}

.editor-body .s-more {
  display: flex;
  justify-content: space-between;
  padding-top: 9px;
}

.s-more div {
  width: 88px;
  height: 20px;
  background: #676d6f;
}
```
